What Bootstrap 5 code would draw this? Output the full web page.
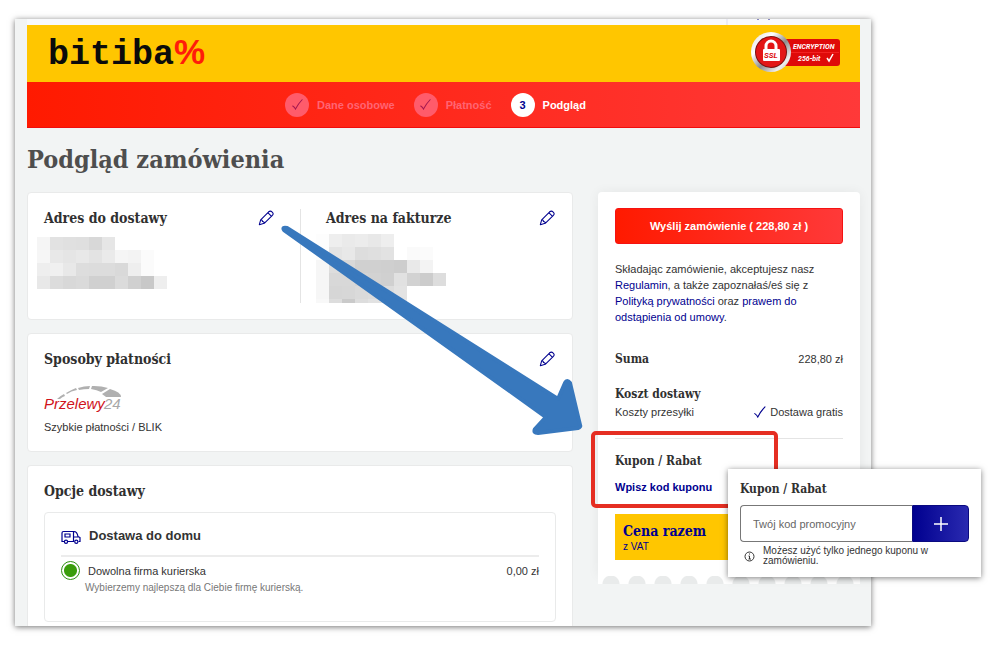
<!DOCTYPE html>
<html lang="pl">
<head>
<meta charset="utf-8">
<meta name="viewport" content="width=device-width, initial-scale=1">
<title>bitiba – Podgląd zamówienia</title>
<link href="https://cdn.jsdelivr.net/npm/bootstrap@5.3.0/dist/css/bootstrap.min.css" rel="stylesheet">
<style>
  :root { --navy: #00008f; --sun: #ffc600; --line: #e9eaea; }
  body { font: 11px/16px "Liberation Sans", Arial, sans-serif; color: #333; background: #fff; }
  h1, h2, h3, .slab { font-family: "DejaVu Serif Condensed", "DejaVu Serif", serif; font-weight: 700; margin: 0; }
  h1 { font-size: 25px; line-height: 32px; color: #4e4e4e; }
  h2 { font-size: 14px; line-height: 18px; color: #303030; }
  aside h2 { font-size: 12px; line-height: 16px; }
  h3.home { font: bold 13px/16px "Liberation Sans", Arial, sans-serif; }
  a { color: var(--navy); text-decoration: none; }
  .sheet { margin: 19px 129px 24px 15px; padding: 0 11px 0 12px; background: #f2f4f4; box-shadow: 0 1px 6px rgba(0,0,0,.55); }
  .strip { height: 6px; background: #f8f9fb; }
  .brandbar { height: 57px; background: var(--sun); padding: 0 20px 0 21px; }
  .logo { font: bold 35px/57px "Liberation Mono", "Courier New", monospace; color: #0b0b0b; }
  .logo span { font-family: "Liberation Sans", Arial, sans-serif; color: #ff1c0a; }
  .steps { height: 46px; gap: 19px; padding-right: 16px; background: linear-gradient(90deg, #ff1a00, #ff3939); border-bottom: 1px solid #f00d0d; font-weight: 700; color: #fff; }
  .steps .done { color: #ff6473; }
  .dot { width: 24px; height: 24px; border-radius: 50%; background: #fff; color: var(--navy); }
  .done .dot { background: #ff5b6b; color: #a3184f; }
  .cols { display: grid; grid-template-columns: minmax(0, 546fr) minmax(0, 262fr); gap: 25px; }
  .stack { gap: 13px; }
  .panel { background: #fff; border: 1px solid var(--line); border-radius: 4px; padding: 16px; }
  .half { width: 50%; min-height: 94px; }
  .half + .half { border-left: 1px solid #e4e4e4; padding-left: 25px; }
  .half:first-child { padding-right: 25px; }
  .edit { border: 0; background: none; padding: 0; width: 18px; height: 18px; display: flex; align-items: center; justify-content: center; }
  .half .blur { display: block; margin: 10px 0 0 -7px; }
  .half + .half .blur { margin: 7px 0 0 -10px; }
  .method { padding-top: 5px; }
  .option { border: 1px solid var(--line); border-radius: 4px; padding: 15px 16px; margin-top: 12px; min-height: 110px; }
  .option-head { padding-bottom: 11px; }
  .rule { height: 2px; background: #ececec; }
  .pick { appearance: none; width: 19px; height: 19px; margin: 0; border: 1px solid #2f9110; border-radius: 50%; background: radial-gradient(circle, #3a9d0b 6px, #fff 7px); }
  .note { color: #777; font-size: 10px; }
  .total { background: #fff; padding: 16px 17px; border-radius: 4px 4px 0 0; box-shadow: 0 0 12px rgba(0,0,0,.06); }
  .terms { margin: 17px 0 26px; }
  .ship { margin-top: 19px; }
  .ship-row { margin: 2px 0 18px; }
  .voucher { border-top: 1px solid #e4e4e4; padding-top: 14px; }
  .voucher a { margin: 10px 0 19px; }
  .scallop { height: 8px; background: radial-gradient(circle at 50% 100%, #e9ebeb 8px, #fff 9px) 0 0 / 26px 8px; }
  .send { height: 36px; border: 1px solid #f51212; border-radius: 3px; color: #fff; font: bold 11px/16px "Liberation Sans", Arial, sans-serif; background: linear-gradient(90deg, #ff1a00, #ff3939); }
  .grand { height: 46px; background: var(--sun); color: var(--navy); padding: 9px 8px; }
  .grand .slab { font-size: 14px; line-height: 17px; }
  .grand small { font-size: 10px; line-height: 13px; }
  .frame { position: absolute; left: -7px; top: 239px; width: 187px; height: 77px; border: 4px solid #e52e22; border-radius: 5px; pointer-events: none; }
  .coupon { position: absolute; left: 130px; top: 277px; width: 253px; height: 108px; background: #fff; box-shadow: 0 1px 6px rgba(0,0,0,.5); padding: 12px 12px 0; }
  .code { height: 37px; border: 1px solid #777; border-right: 0; border-radius: 4px 0 0 4px; padding: 0 12px; font: 11px/16px "Liberation Sans", Arial, sans-serif; min-width: 0; }
  .code::placeholder { color: #666; opacity: 1; }
  .add { width: 57px; height: 37px; border: 1px solid #0a0a80; border-radius: 0 4px 4px 0; background: linear-gradient(90deg, #00008f, #2a2ab0); padding: 0; }
  .hint { font-size: 10px; line-height: 10px; }
  .arrow { position: absolute; left: 253px; top: 29px; pointer-events: none; z-index: 3; }
</style>
</head>
<body>
<svg class="d-none">
  <symbol id="pencil" viewBox="0 0 18 18"><path d="M1.500 16.500 3 11 12 2Q14 .5 16 2.300T16.200 6L7 15ZM3 11Q5 11 5 13 7 13 7 15M11 3l4 4" fill="none" stroke="#00008f" stroke-width="1.200" stroke-linejoin="round"/></symbol>
  <symbol id="tick" viewBox="0 0 12 12"><path d="M.8 7.600 Q3 9 3.800 11 6.500 5.500 11 .8" fill="none" stroke="currentColor" stroke-width="1.100" stroke-linecap="round"/></symbol>
</svg>

<div class="sheet">
  <div class="strip"><svg class="d-block w-100" height="6"><path d="M700 0v6" stroke="#dde"/><path d="M730 .5h2M741 .5h2" stroke="#8888c0"/></svg></div>
  <header>
    <div class="brandbar d-flex justify-content-between align-items-center">
      <a class="logo" href="#">bitiba<span>%</span></a>
      <svg class="mb-1" width="89" height="42" viewBox="0 0 89 42">
        <defs><linearGradient id="steel" x2="1" y2="1"><stop stop-color="#ddd"/><stop offset=".3" stop-color="#fff"/><stop offset=".55" stop-color="#8d8d8d"/><stop offset=".8" stop-color="#eee"/><stop offset="1" stop-color="#aaa"/></linearGradient></defs>
        <rect x="28" y="8" width="61" height="27" rx="3" fill="#df0a09"/>
        <path d="M36 21.500h52" stroke="#f33" stroke-width=".6"/>
        <circle cx="20" cy="21" r="20" fill="url(#steel)"/>
        <circle cx="20" cy="21" r="16" fill="#7d1010"/><circle cx="20" cy="21" r="15" fill="#e31616"/>
        <path d="M15 19v-4a5 5 0 0 1 10 0v4" fill="none" stroke="#fff" stroke-width="3"/>
        <rect x="12" y="18" width="17" height="12" rx="1" fill="#fff"/>
        <g font-family="Roboto" font-style="italic" font-weight="700" fill="#fff">
          <text x="13" y="27" font-size="8" fill="#d11">SSL</text>
          <text x="42" y="18" font-size="7">ENCRYPTION</text>
          <text x="47" y="30" font-size="7">256-bit</text>
        </g>
        <path d="m76 27 2 3 4-7" fill="none" stroke="#fff" stroke-width="1.500"/>
      </svg>
    </div>
    <nav class="steps d-flex justify-content-center align-items-center">
      <div class="done d-flex align-items-center gap-2"><span class="dot d-flex align-items-center justify-content-center"><svg width="11" height="11"><use href="#tick"/></svg></span>Dane osobowe</div>
      <div class="done d-flex align-items-center gap-2"><span class="dot d-flex align-items-center justify-content-center"><svg width="11" height="11"><use href="#tick"/></svg></span>Płatność</div>
      <div class="d-flex align-items-center gap-2"><span class="dot d-flex align-items-center justify-content-center">3</span>Podgląd</div>
    </nav>
  </header>

  <main>
    <h1 class="pt-3 pb-3">Podgląd zamówienia</h1>
    <div class="cols position-relative">
      <div class="stack d-flex flex-column">
        <section class="panel d-flex">
          <div class="half">
            <div class="d-flex justify-content-between align-items-center"><h2>Adres do dostawy</h2><button class="edit" aria-label="Edytuj adres dostawy"><svg width="16" height="16"><use href="#pencil"/></svg></button></div>
            <svg class="blur" id="m1" width="130" height="52" shape-rendering="crispEdges"></svg>
          </div>
          <div class="half">
            <div class="d-flex justify-content-between align-items-center"><h2>Adres na fakturze</h2><button class="edit" aria-label="Edytuj adres na fakturze"><svg width="16" height="16"><use href="#pencil"/></svg></button></div>
            <svg class="blur" id="m2" width="130" height="69" shape-rendering="crispEdges"></svg>
          </div>
        </section>
        <section class="panel">
          <div class="d-flex justify-content-between align-items-center"><h2>Sposoby płatności</h2><button class="edit" aria-label="Edytuj sposób płatności"><svg width="16" height="16"><use href="#pencil"/></svg></button></div>
          <svg class="d-block mt-3" width="80" height="30" viewBox="0 0 80 30">
            <g fill="#b0b0b0"><path d="M13 15q3-3 7-5l1 2q-3 1-5 3z"/><path d="M22 9q5-3 10-5l1 2q-6 1-10 4z"/><path d="M34 4q6-2 12-2l-1 3q-5 0-10 1z"/><path d="M48 2q9-.3 16 2l-7 4q-4-2-10-3z"/><path d="M66 5q11 3 11 8H62l-4-3z"/></g>
            <g font-family="Liberation Sans" font-style="italic" font-size="15"><text x="0" y="25" fill="#d0121b">Przelewy</text><text x="60" y="25" fill="#a8a8a8">24</text></g>
          </svg>
          <div class="method">Szybkie płatności / BLIK</div>
        </section>
        <section class="panel border-bottom-0 rounded-bottom-0 pb-1">
          <h2>Opcje dostawy</h2>
          <div class="option">
            <div class="option-head d-flex align-items-center gap-2">
              <svg width="20" height="16" viewBox="0 0 20 16" fill="none" stroke="#00008f" stroke-width="1.200"><path d="M3 13.500H1V5q0-1.500 1.500-1.500H13q3 0 4 5l2 1v4h-1.500M7 13.500h6M12.500 3.500v10M13 9h4.500M4 6h5v3H4z"/><circle cx="5" cy="13.700" r="1.600"/><circle cx="15.300" cy="13.700" r="1.600"/></svg>
              <h3 class="home">Dostawa do domu</h3>
            </div>
            <div class="rule mb-1"></div>
            <div class="d-flex align-items-center">
              <input class="pick" type="radio" name="courier" id="courier" checked>
              <label class="ms-2" for="courier">Dowolna firma kurierska</label>
              <span class="ms-auto">0,00 zł</span>
            </div>
            <div class="note ms-4">Wybierzemy najlepszą dla Ciebie firmę kurierską.</div>
          </div>
        </section>
      </div>

      <aside class="position-relative align-self-start">
        <div class="total">
          <button class="send w-100">Wyślij zamówienie ( 228,80 zł )</button>
          <p class="terms">Składając zamówienie, akceptujesz nasz <br><a href="#">Regulamin</a>, a także zapoznałaś/eś się z <br><a href="#">Polityką prywatności</a> oraz <a href="#">prawem do<br>odstąpienia od umowy</a>.</p>
          <div class="d-flex justify-content-between"><h2>Suma</h2><span>228,80 zł</span></div>
          <h2 class="ship">Koszt dostawy</h2>
          <div class="ship-row d-flex"><span>Koszty przesyłki</span><span class="d-flex align-items-center gap-1 ms-auto"><svg width="12" height="12" style="color:#00008f"><use href="#tick"/></svg>Dostawa gratis</span></div>
          <div class="voucher">
            <h2>Kupon / Rabat</h2>
            <a class="d-block fw-bold" href="#">Wpisz kod kuponu</a>
          </div>
          <div class="grand"><div class="slab">Cena razem</div><small class="d-block">z VAT</small></div>
        </div>
        <div class="scallop"></div>
        <div class="frame"></div>
        <form class="coupon">
          <h2>Kupon / Rabat</h2>
          <div class="d-flex mt-2">
            <input class="code flex-fill" type="text" placeholder="Twój kod promocyjny" aria-label="Twój kod promocyjny">
            <button class="add" type="button" aria-label="Dodaj"><svg width="16" height="16"><path d="M8 1v14M1 8h14" stroke="#fff" stroke-width="1.500"/></svg></button>
          </div>
          <div class="hint d-flex align-items-center gap-2 mt-1 ms-1">
            <svg class="flex-shrink-0" width="11" height="11" fill="none" stroke="#333"><circle cx="5.500" cy="5.500" r="4.500"/><path d="M4.500 5h1v3M4.500 8h2.500M5 3h1"/></svg>
            <span>Możesz użyć tylko jednego kuponu w<br>zamówieniu.</span>
          </div>
        </form>
      </aside>

      <svg class="arrow" width="308" height="220" viewBox="280 222 308 220"><path d="M287 229 558 400 565 384Q567 380 570 384L580 426Q581 428 578 429L538 434Q533 434 535 430L546 418 284 231Q282 228 287 229Z" fill="#3878bd" stroke="#3878bd" stroke-width="4" stroke-linejoin="round"/></svg>
    </div>
  </main>
</div>

<script src="https://cdn.jsdelivr.net/npm/bootstrap@5.3.0/dist/js/bootstrap.bundle.min.js"></script>
<script>
  // Pixelated stand-ins for the private addresses: one grey level per 13px cell.
  const mosaics = {
    m1: ['f5 e2 e0 df d8 e6', 'f6 e8 e5 e8 e3 ea f5 f3 fb', 'ee f0 e8 dd dc dc d9 ee fb', 'e8 dc d8 da d0 d0 db d0 c8 ee'],
    m2: ['fd ee ea ec e8 ee', 'fd e4 e8 dd df e2 ff fa fb', 'f6 dd d8 d0 d0 cf cd e9 f3', 'f6 d8 d8 d4 d2 d0 e1 d2 cc dd', 'f6 d6 d7 da dc dd e3', 'f8 dd ca dd e2 e2 e6']
  };
  for (const [id, rows] of Object.entries(mosaics)) {
    document.getElementById(id).innerHTML = rows.map((r, y) => r.split(' ').map((c, x) =>
      `<rect x="${x * 13}" y="${y * 13}" width="13" height="13" fill="#${c}${c}${c}"/>`).join('')).join('');
  }
</script>
</body>
</html>
